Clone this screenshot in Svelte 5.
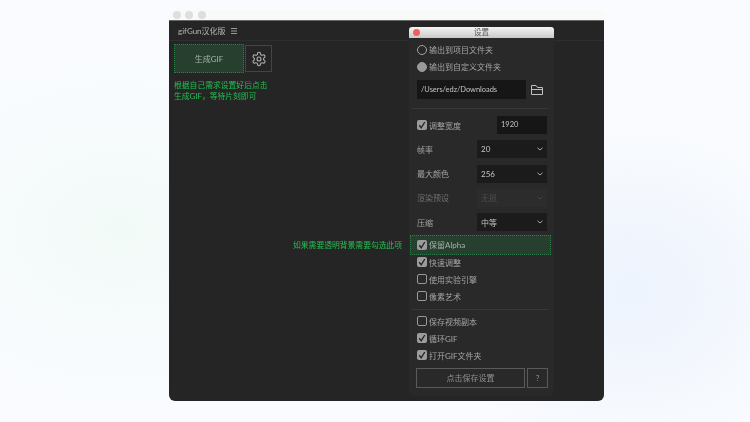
<script>
  const outputs = [
    { label: '输出到项目文件夹', on: false },
    { label: '输出到自定义文件夹', on: true }
  ];
  const selects = [
    { label: '帧率', value: '20' },
    { label: '最大颜色', value: '256' },
    { label: '渲染预设', value: '无损', disabled: true },
    { label: '压缩', value: '中等' }
  ];
  const quality = [
    { label: '快速调整', on: true },
    { label: '使用实验引擎', on: false },
    { label: '像素艺术', on: false }
  ];
  const files = [
    { label: '保存视频副本', on: false },
    { label: '循环GIF', on: true },
    { label: '打开GIF文件夹', on: true }
  ];
</script>

{#snippet check(on)}
  <span class="box" class:on>
    {#if on}
      <svg viewBox="0 0 10 10" width="10" height="10"><path d="M2.200 5.200 4.200 7.800 7.800 2" fill="none" stroke="#262626" stroke-width="1.400" /></svg>
    {/if}
  </span>
{/snippet}

<div class="page">
  <div class="window">
    <div class="chrome">
      <i></i><i></i><i></i>
    </div>
    <div class="app">
      <header>
        <span>gifGun汉化版</span>
        <svg class="menu" viewBox="0 0 6 6" width="6" height="6"><path d="M0 .5h6M0 3h6M0 5.500h6" stroke="#999" stroke-width="1" /></svg>
      </header>
      <div class="actions">
        <button class="generate">生成GIF</button>
        <button class="gear" aria-label="设置">
          <svg viewBox="0 0 24 24" width="16" height="16" fill="none" stroke="#b4b4b4" stroke-width="1.600" stroke-linejoin="round">
            <path d="M12.220 2h-.44a2 2 0 0 0-2 2v.18a2 2 0 0 1-1 1.730l-.43.25a2 2 0 0 1-2 0l-.15-.08a2 2 0 0 0-2.730.73l-.22.38a2 2 0 0 0 .73 2.730l.15.1a2 2 0 0 1 1 1.720v.51a2 2 0 0 1-1 1.740l-.15.09a2 2 0 0 0-.73 2.730l.22.38a2 2 0 0 0 2.730.73l.15-.08a2 2 0 0 1 2 0l.43.25a2 2 0 0 1 1 1.730V20a2 2 0 0 0 2 2h.44a2 2 0 0 0 2-2v-.18a2 2 0 0 1 1-1.730l.43-.25a2 2 0 0 1 2 0l.15.08a2 2 0 0 0 2.730-.73l.22-.39a2 2 0 0 0-.73-2.730l-.15-.08a2 2 0 0 1-1-1.740v-.5a2 2 0 0 1 1-1.740l.15-.09a2 2 0 0 0 .73-2.730l-.22-.38a2 2 0 0 0-2.730-.73l-.15.08a2 2 0 0 1-2 0l-.43-.25a2 2 0 0 1-1-1.730V4a2 2 0 0 0-2-2z" />
            <circle cx="12" cy="12" r="3" />
          </svg>
        </button>
      </div>
      <p class="tip">根据自己需求设置好后点击<br />生成GIF，等待片刻即可</p>

      <p class="hint">如果需要透明背景需要勾选此项</p>

      <section class="panel">
        <div class="titlebar"><i></i><span>设置</span></div>
        <div class="body">
          {#each outputs as o}
            <label class="row">
              <span class="radio" class:on={o.on}></span>{o.label}
            </label>
          {/each}
          <div class="path">
            <span class="field">/Users/edz/Downloads</span>
            <svg viewBox="0 0 12 10" width="12" height="10" fill="none" stroke="#c0c0c0" stroke-width="1"><path d="M.5 9.500V.5H5L6.500 2.500H11.500V9.500zM.5 4.500H11.500" /></svg>
          </div>
          <hr />
          <div class="row width">
            <span class="left">{@render check(true)}调整宽度</span>
            <span class="num">1920</span>
          </div>
          {#each selects as s}
            <div class="row sel" class:disabled={s.disabled}>
              <span>{s.label}</span>
              <span class="select">
                <span>{s.value}</span>
                <svg viewBox="0 0 6 4" width="6" height="4"><path d="M.5.800 3 3 5.500.800" fill="none" stroke="#aaa" stroke-width="1" /></svg>
              </span>
            </div>
          {/each}
          <div class="row alpha">{@render check(true)}保留Alpha</div>
          {#each quality as q}
            <div class="row">{@render check(q.on)}{q.label}</div>
          {/each}
          <hr class="second" />
          {#each files as f}
            <div class="row">{@render check(f.on)}{f.label}</div>
          {/each}
          <div class="footer">
            <button class="save">点击保存设置</button>
            <button class="help">?</button>
          </div>
        </div>
      </section>
    </div>
  </div>
</div>

<style>
  :global(body) {
    margin: 0;
  }
  .page {
    width: 750px;
    height: 422px;
    box-sizing: border-box;
    padding: 10px 0 0 169px;
    overflow: hidden;
    background:
      radial-gradient(ellipse 230px 170px at 120px 230px, #f2faf8, transparent),
      radial-gradient(ellipse 200px 170px at 630px 290px, #edf3fd, transparent),
      #f9fbfe;
    font-family: Lato, 'Noto Sans CJK SC', sans-serif;
  }
  .window {
    width: 435px;
    height: 391px;
    border-radius: 6px;
    overflow: hidden;
    filter: blur(0.3px);
    will-change: transform;
  }
  .chrome {
    height: 11px;
    background: #f9f9f7;
    display: flex;
    gap: 4.300px;
    padding: 1px 0 0 4px;
    box-sizing: border-box;
    border-bottom: 1px solid #666;
  }
  .chrome i {
    width: 8px;
    height: 8px;
    border-radius: 50%;
    background: #dedede;
  }
  .app {
    position: relative;
    height: 380px;
    background: #252525;
  }
  header {
    height: 19px;
    padding: 0 0 0 9px;
    display: flex;
    align-items: center;
    gap: 5px;
    font-size: 8px;
    color: #b5b5b5;
    border-bottom: 1px solid #2e2e2e;
  }
  .actions {
    display: flex;
    gap: 1px;
    padding: 3px 0 0 5px;
  }
  button {
    font: inherit;
    box-sizing: border-box;
    background: none;
    padding: 0;
  }
  .generate {
    width: 70px;
    height: 29px;
    font-size: 8px;
    color: #a6b4aa;
    background: #263f2e;
    border: 1px dotted #2f7a49;
  }
  .gear {
    width: 27px;
    height: 27px;
    margin-top: 1px;
    border: 1px solid #444;
    display: flex;
    align-items: center;
    justify-content: center;
  }
  .tip {
    margin: 7px 0 0 5px;
    font-size: 7.800px;
    line-height: 10.500px;
    color: #1fc24e;
  }
  .hint {
    position: absolute;
    margin: 0;
    left: 124px;
    top: 219px;
    font-size: 7.800px;
    line-height: 11px;
    color: #1fc24e;
  }
  .panel {
    position: absolute;
    left: 240px;
    top: 6px;
    width: 145px;
    height: 369px;
    background: #292929;
    border-radius: 3px 3px 6px 6px;
    color: #a4a4a4;
    font-size: 8px;
  }
  .titlebar {
    height: 11px;
    position: relative;
    text-align: center;
    line-height: 12px;
    color: #555;
    font-size: 7.500px;
    background: linear-gradient(#f4f4f4, #c9c9c9);
    border-radius: 3px 3px 0 0;
  }
  .titlebar i {
    position: absolute;
    left: 4px;
    top: 2px;
    width: 7px;
    height: 7px;
    border-radius: 50%;
    background: #f25f58;
  }
  .body {
    padding: 3px 0 0 8px;
  }
  .row {
    height: 17px;
    display: flex;
    align-items: center;
    gap: 2px;
  }
  .radio {
    width: 8px;
    height: 8px;
    border: 1px solid #a4a4a4;
    border-radius: 50%;
  }
  .radio.on {
    background: #9a9a9a;
    border-color: #9a9a9a;
  }
  .path {
    display: flex;
    align-items: center;
    gap: 5px;
    margin-top: 5px;
  }
  .field {
    width: 109px;
    height: 19px;
    box-sizing: border-box;
    padding-left: 4px;
    line-height: 19px;
    background: #161616;
    color: #c4c4c4;
    font-size: 7.500px;
    letter-spacing: -0.05px;
  }
  hr {
    border: 0;
    border-top: 1px solid #383838;
    margin: 9px 0 7px -5px;
    width: 137px;
  }
  hr.second {
    margin: 4px 0 3px -5px;
  }
  .width {
    justify-content: space-between;
    height: 18px;
    margin-right: 7px;
  }
  .left {
    display: flex;
    align-items: center;
    gap: 2px;
  }
  .num {
    width: 50px;
    height: 18px;
    line-height: 18px;
    box-sizing: border-box;
    padding-left: 4px;
    background: #161616;
    color: #c4c4c4;
    font-size: 7.500px;
  }
  .sel {
    height: 18px;
    margin: 6.300px 7px 0 0;
    justify-content: space-between;
  }
  .select {
    width: 70px;
    height: 18px;
    box-sizing: border-box;
    padding: 0 4px;
    display: flex;
    align-items: center;
    justify-content: space-between;
    background: #1b1b1b;
    color: #c4c4c4;
  }
  .sel.disabled {
    color: #707070;
  }
  .sel.disabled .select {
    background: #2c2c2c;
    color: #4e4e4e;
  }
  .sel.disabled path {
    stroke: #484848;
  }
  .alpha {
    height: 20px;
    width: 141px;
    margin: 3.800px 0 -1px -7px;
    padding-left: 7px;
    box-sizing: border-box;
    background: #263f2e;
    outline: 1px dotted #2f7a49;
    outline-offset: -1px;
    color: #a6b4aa;
  }
  .box {
    width: 10px;
    height: 10px;
    box-sizing: border-box;
    border: 1px solid #989898;
    border-radius: 2px;
    flex: none;
  }
  .box.on {
    background: #9c9c9c;
    border: 0;
  }
  .box svg {
    display: block;
  }
  .footer {
    display: flex;
    gap: 2px;
    margin: 4px 0 0 -1px;
  }
  .save,
  .help {
    height: 20px;
    border: 1px solid #5a5a5a;
    color: #909090;
    font-size: 8px;
  }
  .save {
    width: 109px;
  }
  .help {
    width: 21px;
  }
</style>
